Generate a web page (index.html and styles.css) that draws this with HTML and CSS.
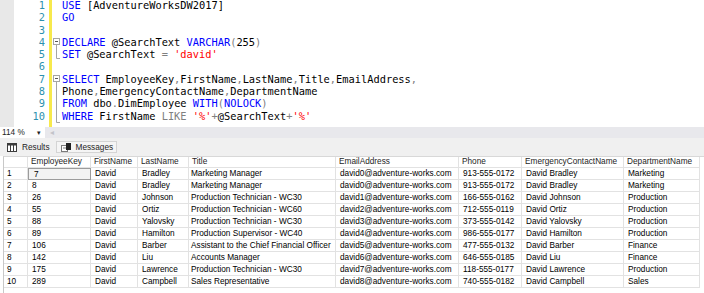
FILE: index.html
```html
<!DOCTYPE html>
<html lang="en">
<head>
  <meta charset="UTF-8" />
  <title>SQLQuery - AdventureWorksDW2017</title>
  <link rel="stylesheet" href="styles.css">
</head>
<body>
  <div class="editor">
    <div class="margin"></div>
    <div class="line-nums">
      <div>1</div><div>2</div><div>3</div><div>4</div><div>5</div><div>6</div>
      <div>7</div><div>8</div><div>9</div><div>10</div>
    </div>
    <div class="change-bar"></div>
    <div class="fold">
      <svg width="10" height="127" viewBox="0 0 10 127">
        <!-- DECLARE block -->
        <line x1="4.5" y1="45" x2="4.5" y2="58.5" stroke="#a5a5a5" />
        <line x1="4.5" y1="58.5" x2="8" y2="58.5" stroke="#a5a5a5" />
        <rect x="1.5" y="38.5" width="6" height="6" fill="#fff" stroke="#a5a5a5" />
        <line x1="3" y1="41.5" x2="6" y2="41.5" stroke="#555" />
        <!-- SELECT block -->
        <line x1="4.5" y1="82" x2="4.5" y2="122.5" stroke="#a5a5a5" />
        <line x1="4.5" y1="122.5" x2="8" y2="122.5" stroke="#a5a5a5" />
        <rect x="1.5" y="75.5" width="6" height="6" fill="#fff" stroke="#a5a5a5" />
        <line x1="3" y1="78.5" x2="6" y2="78.5" stroke="#555" />
      </svg>
    </div>
<pre class="code"><span class="kw">USE</span> [AdventureWorksDW2017]
<span class="kw">GO</span>

<span class="kw">DECLARE</span> @SearchText <span class="kw">VARCHAR</span><span class="op">(</span>255<span class="op">)</span>
<span class="kw">SET</span> @SearchText <span class="op">=</span> <span class="str">'david'</span>

<span class="kw">SELECT</span> EmployeeKey<span class="op">,</span>FirstName<span class="op">,</span>LastName<span class="op">,</span>Title<span class="op">,</span>EmailAddress<span class="op">,</span>
Phone<span class="op">,</span>EmergencyContactName<span class="op">,</span>DepartmentName
<span class="kw">FROM</span> dbo<span class="op">.</span>DimEmployee <span class="kw">WITH</span><span class="op">(</span><span class="kw">NOLOCK</span><span class="op">)</span>
<span class="kw">WHERE</span> FirstName <span class="op">LIKE</span> <span class="str">'%'</span><span class="op">+</span>@SearchText<span class="op">+</span><span class="str">'%'</span>
</pre>
  </div>

  <div class="zoom-bar">
    <div class="zoom-combo">114 %<span class="combo-arrow">&#9662;</span></div>
    <div class="hscroll"><span class="scroll-left">&#9666;</span></div>
  </div>

  <div class="tabs">
    <div class="tab active">
      <svg width="10" height="9" viewBox="0 0 10 9">
        <rect x="0.5" y="0.5" width="9" height="8" fill="#fff" stroke="#3c3c3c" />
        <rect x="0" y="0" width="10" height="2.5" fill="#3c3c3c" />
        <line x1="3.5" y1="2" x2="3.5" y2="9" stroke="#3c3c3c" />
        <line x1="6.5" y1="2" x2="6.5" y2="9" stroke="#3c3c3c" />
      </svg>
      Results
    </div>
    <div class="tab">
      <svg width="10" height="9" viewBox="0 0 10 9">
        <rect x="0.5" y="2.5" width="6" height="6" fill="#fff" stroke="#7a7a7a" />
        <line x1="2" y1="5" x2="5" y2="5" stroke="#7a7a7a" />
        <rect x="5" y="0" width="5" height="7" fill="#222" />
      </svg>
      Messages
    </div>
  </div>

  <div class="results">
    <div class="grid" id="grid"></div>
  </div>

  <script>
    // Query result rows
    const columns = ['', 'EmployeeKey', 'FirstName', 'LastName', 'Title', 'EmailAddress', 'Phone', 'EmergencyContactName', 'DepartmentName'];
    const rows = [
      [7, 'David', 'Bradley', 'Marketing Manager', 'david0@adventure-works.com', '913-555-0172', 'David Bradley', 'Marketing'],
      [8, 'David', 'Bradley', 'Marketing Manager', 'david0@adventure-works.com', '913-555-0172', 'David Bradley', 'Marketing'],
      [26, 'David', 'Johnson', 'Production Technician - WC30', 'david1@adventure-works.com', '166-555-0162', 'David Johnson', 'Production'],
      [55, 'David', 'Ortiz', 'Production Technician - WC60', 'david2@adventure-works.com', '712-555-0119', 'David Ortiz', 'Production'],
      [88, 'David', 'Yalovsky', 'Production Technician - WC30', 'david3@adventure-works.com', '373-555-0142', 'David Yalovsky', 'Production'],
      [89, 'David', 'Hamilton', 'Production Supervisor - WC40', 'david4@adventure-works.com', '986-555-0177', 'David Hamilton', 'Production'],
      [106, 'David', 'Barber', 'Assistant to the Chief Financial Officer', 'david5@adventure-works.com', '477-555-0132', 'David Barber', 'Finance'],
      [142, 'David', 'Liu', 'Accounts Manager', 'david6@adventure-works.com', '646-555-0185', 'David Liu', 'Finance'],
      [175, 'David', 'Lawrence', 'Production Technician - WC30', 'david7@adventure-works.com', '118-555-0177', 'David Lawrence', 'Production'],
      [289, 'David', 'Campbell', 'Sales Representative', 'david8@adventure-works.com', '740-555-0182', 'David Campbell', 'Sales']
    ];

    const grid = document.getElementById('grid');
    columns.forEach(name => {
      const cell = document.createElement('div');
      cell.className = 'head';
      cell.textContent = name;
      grid.appendChild(cell);
    });
    rows.forEach((row, i) => {
      [i + 1, ...row].forEach((value, c) => {
        const cell = document.createElement('div');
        cell.className = 'cell' + (c === 0 ? ' row-num' : '') + (c === 4 ? ' title' : '');
        if (i === 0 && c === 1) cell.className += ' selected';
        cell.textContent = value;
        grid.appendChild(cell);
      });
    });
  </script>
</body>
</html>
```

FILE: styles.css
```css
body {
  margin: 0;
  width: 704px;
  height: 293px;
  overflow: hidden;
  background: #fff;
  color: #000;
  font-family: "Liberation Sans", Arial, sans-serif;
  font-size: 8.25px;
}

/* query editor */
.editor {
  display: flex;
  height: 127px;
  overflow: hidden;
  background: #fff;
}
.margin {
  flex: none;
  width: 14px;
  background: #e8e8e8;
}
.line-nums,
.code {
  font-family: "DejaVu Sans Mono", monospace;
  font-size: 10.35px;
  line-height: 12.3px;
  margin-top: -1px;
}
.line-nums {
  flex: none;
  width: 31px;
  text-align: right;
  color: #2b91af;
}
.change-bar {
  flex: none;
  width: 3px;
  margin-left: 4px;
  background: #f7e94c;
}
.fold {
  flex: none;
  width: 10px;
}
.fold svg {
  display: block;
}
.code {
  margin-bottom: 0;
  white-space: pre;
  color: #000;
}
.kw { color: #0000ff; }
.op { color: #808080; }
.str { color: #ff0000; }

/* zoom strip */
.zoom-bar {
  display: flex;
  height: 11px;
  background: #e8e8ec;
}
.zoom-combo {
  position: relative;
  width: 45px;
  padding-left: 2px;
  box-sizing: border-box;
  background: #fff;
  line-height: 11px;
  color: #1e1e1e;
}
.combo-arrow {
  position: absolute;
  right: 4px;
  top: 0;
  font-size: 7px;
}
.hscroll {
  flex: 1;
  padding-left: 5px;
  line-height: 11px;
  color: #c2c3c9;
  font-size: 8px;
}

/* results tabs */
.tabs {
  display: flex;
  align-items: center;
  gap: 3px;
  height: 18px;
  padding-left: 3px;
  background: #f0f0f0;
}
.tab {
  display: flex;
  align-items: center;
  gap: 5px;
  height: 11px;
  padding: 0 3px 0 4px;
  color: #1e1e1e;
}
.tab:not(.active) {
  height: 10px;
  border: 1px solid #d4d4d4;
  background: #f5f5f5;
}

/* results grid */
.results {
  height: 137px;
  margin-left: 3px;
  border-left: 1px solid #c8c8c8;
  border-top: 1px solid #d8d8d8;
  background: #fff;
}
.grid {
  display: grid;
  grid-template-columns: 24px 63px 47px 51px 147px 123px 63px 102px 76px;
}
.head,
.cell {
  box-sizing: border-box;
  border-right: 1px solid #e2e2e2;
  border-bottom: 1px solid #e2e2e2;
  white-space: nowrap;
  overflow: hidden;
}
.head {
  height: 11px;
  line-height: 10px;
  padding-left: 3px;
  color: #1e1e1e;
}
.cell {
  height: 12px;
  line-height: 11px;
  padding-left: 4px;
}
.cell.row-num {
  padding-left: 3px;
}
.cell.title {
  padding-left: 2px;
}
.cell.selected {
  border: 1px solid #9c9c9c;
  padding-left: 5px;
  background: #f3f3f3;
}
```
